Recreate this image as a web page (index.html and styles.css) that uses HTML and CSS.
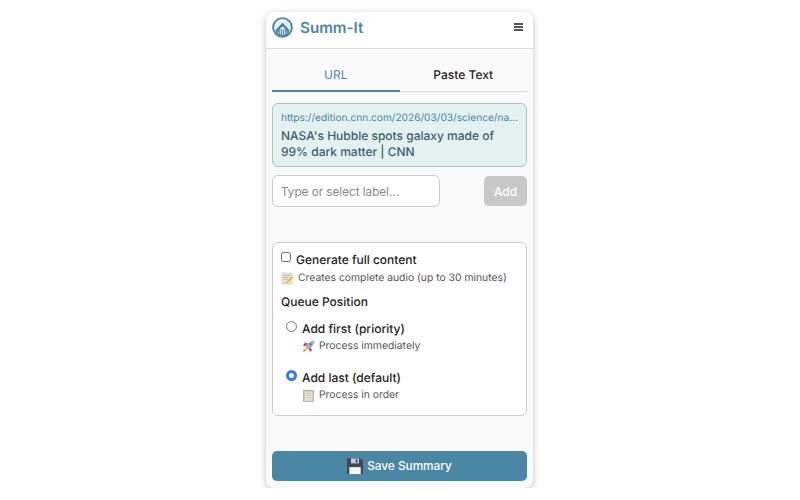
FILE: index.html
```html
<!DOCTYPE html>
<html lang="en">
<head>
  <meta charset="UTF-8">
  <title>Summ-It</title>
  <link rel="stylesheet" href="styles.css">
</head>
<body>
  <div class="popup">
    <header class="topbar">
      <div class="brand">
        <svg class="logo" width="21" height="21" viewBox="0 0 22 22">
          <circle cx="11" cy="11" r="9.8" fill="#e8f1f4" stroke="#4a87a5" stroke-width="2"/>
          <path d="M3.2 14.5 L11 6 L18.8 14.5 L15.8 14.5 L11 9.6 L6.2 14.5 Z" fill="#3f7f9d"/>
          <path d="M3.6 15 Q11 10.5 18.4 15 Q16 20.8 11 20.8 Q6 20.8 3.6 15 Z" fill="#4a87a5"/>
          <path d="M7 15v2.5M9 13.5v5M11 12.5v6.5M13 13.5v5M15 15v2.5" stroke="#dcebf1" stroke-width="1" fill="none"/>
        </svg>
        <span class="brand-name">Summ-It</span>
      </div>
      <div class="menu-btn"><span></span><span></span><span></span></div>
    </header>

    <main class="content">
      <div class="tabs">
        <div class="tab active">URL</div>
        <div class="tab">Paste Text</div>
      </div>

      <div class="page-card">
        <div class="page-url">https://edition.cnn.com/2026/03/03/science/na...</div>
        <div class="page-title">NASA's Hubble spots galaxy made of 99% dark matter | CNN</div>
      </div>

      <div class="label-row">
        <input class="label-input" type="text" placeholder="Type or select label...">
        <button class="add-btn" type="button">Add</button>
      </div>

      <section class="options">
        <label class="check-row">
          <span class="checkbox"></span>
          <span class="check-text">Generate full content</span>
        </label>
        <div class="hint hint-top">
          <svg class="emoji" width="13" height="13" viewBox="0 0 13 13">
            <rect x="1" y="1" width="10" height="11" fill="#e9e4d4" stroke="#c9c2ae" stroke-width=".6"/>
            <path d="M2.5 3.5h7M2.5 5.5h5M2.5 7.5h4" stroke="#a9a596" stroke-width=".6"/>
            <path d="M5 10 L11 4 L12.5 5.5 L6.5 11 L4.5 11.5 Z" fill="#e8b93a"/>
          </svg>
          <span>Creates complete audio (up to 30 minutes)</span>
        </div>

        <div class="queue-title">Queue Position</div>

        <label class="radio-row">
          <span class="radio"></span>
          <span class="check-text">Add first (priority)</span>
        </label>
        <div class="hint hint-radio">
          <svg class="emoji" width="13" height="13" viewBox="0 0 13 13">
            <path d="M3 2.5 L6 3.5 L3.5 6 L1 6 Z M7 7 L10 9.5 L9 12 L7 10 Z" fill="#c9453a"/>
            <path d="M3.8 7.6 C5 4 8 1.5 12.2 .8 C11.6 5 9 8 5.4 9.2 Z" fill="#a9b4c0" stroke="#6f7c8a" stroke-width=".4"/>
            <circle cx="8.6" cy="4.4" r="1.1" fill="#3c6fa8"/>
            <path d="M1 12 C1.2 10 2 9 3.6 8.6 L4.4 9.4 C4 11 3 11.8 1 12 Z" fill="#f0a22e"/>
          </svg>
          <span>Process immediately</span>
        </div>

        <label class="radio-row radio-row-last">
          <span class="radio checked"></span>
          <span class="check-text">Add last (default)</span>
        </label>
        <div class="hint hint-radio">
          <svg class="emoji" width="13" height="13" viewBox="0 0 13 13">
            <rect x="1.5" y="1.2" width="10" height="11.3" fill="#c9bfa6" stroke="#9f9680" stroke-width=".5"/>
            <rect x="2.6" y="2.6" width="7.8" height="9" fill="#e6e3db"/>
            <path d="M3.5 4.5h6M3.5 6.5h6M3.5 8.5h6" stroke="#b8b5ab" stroke-width=".6"/>
          </svg>
          <span>Process in order</span>
        </div>
      </section>

      <button class="save-btn" type="button">
        <svg class="save-icon" width="16" height="16" viewBox="1 1 14 14">
          <path d="M1 1.5 H13 L15 3.5 V15 H1 Z" fill="#3f4a54"/>
          <rect x="3" y="9" width="10" height="6" fill="#f4f4f4"/>
          <rect x="4.5" y="1.5" width="7" height="4.2" fill="#c8ced3"/>
          <rect x="8.6" y="2.2" width="1.6" height="2.8" fill="#3f4a54"/>
        </svg>
        Save Summary
      </button>
    </main>
  </div>
</body>
</html>
```

FILE: styles.css
```css
* {
  box-sizing: border-box;
}
body {
  margin: 0;
  background: #fff;
  font-family: Inter, "Liberation Sans", sans-serif;
  color: #222;
  text-rendering: geometricPrecision;
}
.popup {
  width: 267px;
  height: 476px;
  margin: 12px 0 0 266px;
  background: #fafafa;
  border-radius: 8px;
  box-shadow: 0 2px 7px rgba(0, 0, 0, 0.25);
  overflow: hidden;
  display: flex;
  flex-direction: column;
}
.topbar {
  height: 37px;
  padding: 0 10px 6px 6px;
  background: #fff;
  border-bottom: 1px solid #dcdcdc;
  display: flex;
  align-items: center;
  justify-content: space-between;
}
.brand {
  display: flex;
  align-items: center;
  gap: 7px;
}
.brand-name {
  font-size: 15.2px;
  font-weight: 600;
  color: #4a87a5;
}
.menu-btn {
  width: 9px;
  display: flex;
  flex-direction: column;
  gap: 1.5px;
}
.menu-btn span {
  height: 1.5px;
  background: #555;
}
.content {
  flex: 1;
  padding: 10px 6px 7px;
  display: flex;
  flex-direction: column;
}
.tabs {
  display: flex;
  border-bottom: 1px solid #d8d8d8;
  height: 33px;
}
.tab {
  flex: 1;
  text-align: center;
  font-size: 12px;
  font-weight: 450;
  line-height: 32px;
  height: 33px;
}
.tab.active {
  color: #4a87a5;
  border-bottom: 2px solid #4a87a5;
  font-weight: 400;
}
.page-card {
  margin-top: 11px;
  height: 64px;
  padding: 7px 8px;
  background: #e4f1f1;
  border: 1px solid #9cc8c8;
  border-radius: 6px;
}
.page-url {
  font-size: 10.15px;
  line-height: 14px;
  color: #4a87a5;
  white-space: nowrap;
}
.page-title {
  margin-top: 3px;
  font-size: 12px;
  font-weight: 450;
  line-height: 16px;
  color: #3a5f72;
}
.label-row {
  margin-top: 8px;
  display: flex;
  justify-content: space-between;
  align-items: center;
}
.label-input {
  width: 168px;
  height: 32px;
  padding: 1px 8px 0;
  border: 1px solid #ccc;
  border-radius: 6px;
  background: #fff;
  font-family: inherit;
  font-size: 11.7px;
}
.label-input::placeholder {
  color: #8a8a8a;
}
.add-btn {
  width: 43px;
  height: 30px;
  border: none;
  border-radius: 5px;
  background: #c8c8c8;
  color: #fff;
  font-family: inherit;
  font-size: 12px;
  font-weight: 500;
}
.options {
  margin-top: 35px;
  height: 174px;
  padding: 9px 8px 8px;
  background: #fff;
  border: 1px solid #ccc;
  border-radius: 6px;
}
.check-row,
.radio-row {
  display: flex;
  align-items: flex-start;
}
.check-text {
  font-size: 12px;
  font-weight: 450;
  line-height: 16px;
}
.checkbox {
  width: 10px;
  height: 10px;
  margin: 0 5px 0 0;
  border: 1px solid #666;
  border-radius: 2.5px;
  background: #fff;
}
.hint {
  display: flex;
  align-items: center;
  gap: 4px;
  font-size: 10.35px;
  line-height: 14px;
  color: #555;
}
.hint-top {
  margin-top: 3px;
}
.queue-title {
  margin-top: 9px;
  font-size: 12px;
  font-weight: 450;
  line-height: 16px;
}
.radio-row {
  margin: 11px 0 0 5px;
}
.radio-row-last {
  margin-top: 17px;
}
.radio {
  width: 11px;
  height: 11px;
  margin: 0 5px 0 0;
  border: 1px solid #767676;
  border-radius: 50%;
  background: #fff;
}
.radio.checked {
  border: 3px solid #3b76e8;
}
.hint-radio {
  margin: 2px 0 0 21px;
}
.save-btn {
  margin-top: auto;
  height: 30px;
  border: none;
  border-radius: 5px;
  background: #4a87a5;
  color: #fff;
  font-family: inherit;
  font-size: 11.8px;
  font-weight: 500;
  display: flex;
  align-items: center;
  justify-content: center;
  gap: 4px;
}
```
